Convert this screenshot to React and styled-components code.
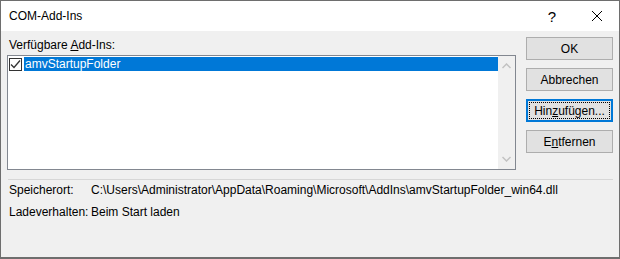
import styled, { createGlobalStyle } from "styled-components";

const GlobalStyle = createGlobalStyle`
	html, body {
		margin: 0;
		padding: 0;
		background: #ffffff;
	}
	body {
		font-family: "Liberation Sans", Arial, sans-serif;
		font-size: 12px;
		color: #000;
	}
`;

const buttons = [
	{ label: "OK" },
	{ label: "Abbrechen" },
	{ label: "Hinzufügen...", key: "z", focused: true },
	{ label: "Entfernen", key: "n" },
];

const Accel = ({ text, letter }) => {
	if (!letter) return text;
	const i = text.indexOf(letter);
	return (
		<>
			{text.slice(0, i)}
			<u>{text[i]}</u>
			{text.slice(i + 1)}
		</>
	);
};

const App = () => {
	return (
		<>
			<GlobalStyle />
			<Window>
				<TitleBar>
					<Title>COM-Add-Ins</Title>
					<TitleButton>?</TitleButton>
					<TitleButton>
						<svg width="12" height="12" viewBox="0 0 12 12">
							<path d="M1 1 L11 11 M11 1 L1 11" stroke="#000" strokeWidth="1" />
						</svg>
					</TitleButton>
				</TitleBar>
				<Body>
					<Top>
						<ListColumn>
							<Label>
								Verfügbare <u>A</u>dd-Ins:
							</Label>
							<ListBox>
								<Items>
									<Item>
										<CheckBox>
											<svg width="11" height="11" viewBox="0 0 11 11">
												<path
													d="M1 5.5 L4 8.5 L10 1.5"
													stroke="#333"
													strokeWidth="1.3"
													fill="none"
												/>
											</svg>
										</CheckBox>
										<ItemText $selected>amvStartupFolder</ItemText>
									</Item>
								</Items>
								<ScrollBar>
									<Arrow>
										<svg width="9" height="6" viewBox="0 0 9 6">
											<path d="M0.5 5 L4.5 1 L8.5 5" stroke="#c2c2c2" strokeWidth="1.5" fill="none" />
										</svg>
									</Arrow>
									<Arrow>
										<svg width="9" height="6" viewBox="0 0 9 6">
											<path d="M0.5 1 L4.5 5 L8.5 1" stroke="#c2c2c2" strokeWidth="1.5" fill="none" />
										</svg>
									</Arrow>
								</ScrollBar>
							</ListBox>
						</ListColumn>
						<ButtonColumn>
							{buttons.map((b) => (
								<Button key={b.label} $focused={b.focused}>
									<ButtonInner $focused={b.focused}>
										<Accel text={b.label} letter={b.key} />
									</ButtonInner>
								</Button>
							))}
						</ButtonColumn>
					</Top>
					<Separator />
					<InfoGrid>
						<span>Speicherort:</span>
						<span>
							C:\Users\Administrator\AppData\Roaming\Microsoft\AddIns\amvStartupFolder_win64.dll
						</span>
						<span>Ladeverhalten:</span>
						<span>Beim Start laden</span>
					</InfoGrid>
				</Body>
			</Window>
		</>
	);
};
export default App;

const Window = styled.div`
	width: 620px;
	height: 259px;
	box-sizing: border-box;
	border: 1px solid #6e6e6e;
	border-bottom-width: 2px;
	display: flex;
	flex-direction: column;
	overflow: hidden;
`;

const TitleBar = styled.div`
	height: 30px;
	background: #fff;
	display: flex;
	align-items: center;
	padding-left: 8px;
`;

const Title = styled.div`
	flex: 1;
	font-size: 12px;
`;

const TitleButton = styled.div`
	width: 46px;
	height: 30px;
	display: flex;
	align-items: center;
	justify-content: center;
	font-size: 15px;
	&:last-child {
		width: 44px;
	}
`;

const Body = styled.div`
	flex: 1;
	background: #f0f0f0;
	padding: 6px 6px 0 6px;
	display: flex;
	flex-direction: column;
`;

const Top = styled.div`
	display: flex;
	gap: 10px;
`;

const ListColumn = styled.div`
	flex: 1;
	display: flex;
	flex-direction: column;
`;

const Label = styled.div`
	padding: 2px 0 0 2px;
	height: 13px;
	line-height: 13px;
	margin-bottom: 3px;
`;

const ListBox = styled.div`
	height: 113px;
	border: 1px solid #828790;
	background: #fff;
	display: flex;
`;

const Items = styled.div`
	flex: 1;
	padding-top: 1px;
`;

const Item = styled.div`
	display: flex;
	align-items: center;
	height: 14px;
	padding-left: 1px;
`;

const CheckBox = styled.div`
	width: 13px;
	height: 13px;
	box-sizing: border-box;
	border: 1px solid #333;
	background: #fff;
	display: flex;
	align-items: center;
	justify-content: center;
	margin-right: 2px;
`;

const ItemText = styled.div`
	flex: 1;
	height: 14px;
	line-height: 14px;
	padding-left: 1px;
	background: ${(p) => (p.$selected ? "#0078d7" : "transparent")};
	color: ${(p) => (p.$selected ? "#fff" : "#000")};
`;

const ScrollBar = styled.div`
	width: 17px;
	background: #f0f0f0;
	display: flex;
	flex-direction: column;
	justify-content: space-between;
	align-items: center;
	padding: 6px 0;
`;

const Arrow = styled.div`
	height: 8px;
	display: flex;
	align-items: center;
`;

const ButtonColumn = styled.div`
	width: 87px;
	display: flex;
	flex-direction: column;
	gap: 8px;
`;

const Button = styled.div`
	height: 23px;
	box-sizing: border-box;
	background: #e1e1e1;
	border: ${(p) => (p.$focused ? "2px solid #0078d7" : "1px solid #adadad")};
	padding: ${(p) => (p.$focused ? "1px" : "2px")};
	display: flex;
`;

const ButtonInner = styled.div`
	flex: 1;
	display: flex;
	align-items: center;
	justify-content: center;
	outline: ${(p) => (p.$focused ? "1px dotted #000" : "none")};
	outline-offset: -1px;
`;

const Separator = styled.div`
	height: 1px;
	background: #d7d7d7;
	margin: 9px 0 0 1px;
`;

const InfoGrid = styled.div`
	display: grid;
	grid-template-columns: 82px 1fr;
	row-gap: 8px;
	padding: 3px 0 0 2px;
	line-height: 14px;
`;
